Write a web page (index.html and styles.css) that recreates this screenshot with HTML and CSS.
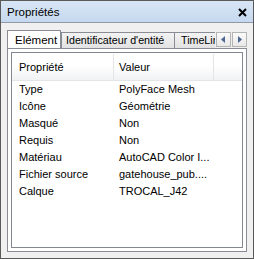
FILE: index.html
```html
<!DOCTYPE html>
<html lang="fr">
<head>
    <meta charset="UTF-8">
    <title>Propriétés</title>
    <link rel="stylesheet" href="styles.css">
</head>
<body>
    <div class="window">
        <div class="titlebar">
            <span class="title">Propriétés</span>
            <svg class="close" width="9" height="9" viewBox="0 0 9 9">
                <path d="M1 1 L8 8 M8 1 L1 8" stroke="#000" stroke-width="2"/>
            </svg>
        </div>
        <div class="content">
            <div class="tabstrip">
                <div class="tabs">
                    <div class="tab active">Elément</div>
                    <div class="tab tab-id">Identificateur d'entité</div>
                    <div class="tab tab-time">TimeLiner</div>
                </div>
                <div class="scroller">
                    <div class="scroll-btn">
                        <svg width="5" height="7" viewBox="0 0 5 7"><path d="M4 0 L4 7 L0 3.5 Z" fill="#4b6791"/></svg>
                    </div>
                    <div class="scroll-btn">
                        <svg width="5" height="7" viewBox="0 0 5 7"><path d="M1 0 L1 7 L5 3.5 Z" fill="#4b6791"/></svg>
                    </div>
                </div>
            </div>
            <div class="panel">
                <div class="list">
                    <div class="row header">
                        <div class="cell">Propriété</div>
                        <div class="cell">Valeur</div>
                        <div class="cell"></div>
                    </div>
                    <div class="row"><div class="cell">Type</div><div class="cell">PolyFace Mesh</div></div>
                    <div class="row"><div class="cell">Icône</div><div class="cell">Géométrie</div></div>
                    <div class="row"><div class="cell">Masqué</div><div class="cell">Non</div></div>
                    <div class="row"><div class="cell">Requis</div><div class="cell">Non</div></div>
                    <div class="row"><div class="cell">Matériau</div><div class="cell">AutoCAD Color I...</div></div>
                    <div class="row"><div class="cell">Fichier source</div><div class="cell">gatehouse_pub....</div></div>
                    <div class="row"><div class="cell">Calque</div><div class="cell">TROCAL_J42</div></div>
                </div>
            </div>
        </div>
    </div>
</body>
</html>
```

FILE: styles.css
```css
body {
    margin: 0;
    font-family: "Liberation Sans", Arial, sans-serif;
    font-size: 11px;
    color: #000;
}
.window {
    width: 254px;
    height: 259px;
    box-sizing: border-box;
    border: 1px solid #5a5a5a;
    background-color: #f0f0f0;
    display: flex;
    flex-direction: column;
}
.titlebar {
    height: 21px;
    border-bottom: 1px solid #8e9aa8;
    background: linear-gradient(#d8e6f6, #c6d8ee);
    display: flex;
    align-items: center;
    justify-content: space-between;
    padding: 0 6px 0 6px;
}
.title {
    font-size: 11.5px;
}
.close {
    margin-top: 1px;
}
.content {
    flex: 1;
    display: flex;
    flex-direction: column;
    padding: 7px 6px 6px 6px;
}
.tabstrip {
    height: 18px;
    display: flex;
}
.tabs {
    width: 208px;
    display: flex;
    overflow: hidden;
    align-items: flex-end;
}
.tab {
    flex-shrink: 0;
    box-sizing: border-box;
    height: 16px;
    border: 1px solid #898c95;
    border-bottom: none;
    background: linear-gradient(#f3f3f3, #e2e2e2);
    padding-left: 6px;
    line-height: 14px;
    white-space: nowrap;
    margin-left: -1px;
    font-size: 10.7px;
}
.tab.active {
    width: 54px;
    height: 19px;
    margin-left: 0;
    margin-right: 1px;
    margin-bottom: -1px;
    background: #fff;
    position: relative;
    z-index: 1;
    padding-left: 7px;
    line-height: 19px;
    font-size: 11.5px;
}
.tab-id {
    width: 114px;
    padding-left: 4px;
}
.tab-time {
    width: 60px;
}
.scroller {
    display: flex;
    gap: 1px;
    padding-top: 2px;
    margin-left: 1px;
}
.scroll-btn {
    box-sizing: border-box;
    width: 15px;
    height: 15px;
    border: 1px solid #b4b4b4;
    background: linear-gradient(#fbfbfb, #e8e8e8);
    display: flex;
    align-items: center;
    justify-content: center;
}
.panel {
    flex: 1;
    border: 1px solid #898c95;
    background-color: #fff;
    padding: 3px;
    display: flex;
}
.list {
    flex: 1;
    border: 1px solid #828790;
    background-color: #fff;
}
.row {
    display: grid;
    grid-template-columns: 102px 100px 1fr;
    height: 17px;
    line-height: 17px;
}
.row .cell {
    white-space: nowrap;
    overflow: hidden;
}
.row .cell:first-child {
    padding-left: 7px;
}
.row .cell:nth-child(2) {
    padding-left: 5px;
}
.header {
    height: 26px;
    line-height: 26px;
    margin-top: 1px;
    border-bottom: 1px solid #e3e5e8;
    background: linear-gradient(#ffffff 45%, #f1f2f4);
}
.header .cell {
    border-right: 1px solid #e3e5e8;
}
.header .cell:last-child {
    border-right: none;
}
```
